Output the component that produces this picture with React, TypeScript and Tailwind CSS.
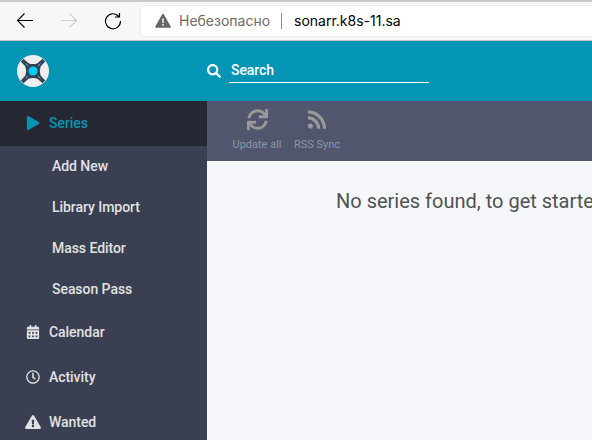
import type { ReactNode } from "react";
import {
  FaCalendarAlt,
  FaExclamationTriangle,
  FaPlay,
  FaRegClock,
  FaRss,
  FaSearch,
  FaSync,
} from "react-icons/fa";

function BrowserBar() {
  return (
    <div className="flex h-[41px] shrink-0 items-center border-t-2 border-b border-t-[#cacaca] border-b-[#c6c6c6] bg-[#f7f7f7] text-black">
      <svg className="ml-[16px] h-[18px] w-[18px] shrink-0" viewBox="0 0 18 18" fill="none" stroke="currentColor" strokeWidth="1.1">
        <path d="M17 8.5H1.5M8.5 1.5L1.5 8.5L8.5 15.5" />
      </svg>
      <svg className="ml-[26px] h-[18px] w-[18px] shrink-0 text-[#cdcdcd]" viewBox="0 0 18 18" fill="none" stroke="currentColor" strokeWidth="1.1">
        <path d="M1 8.5H16.5M9.5 1.5L16.5 8.5L9.5 15.5" />
      </svg>
      <svg className="ml-[26px] h-[18px] w-[18px] shrink-0" viewBox="0 0 18 18" fill="none" stroke="currentColor" strokeWidth="1.2">
        <path d="M14.8 4.5A7.5 7.5 0 1 0 16.5 9M15.5 1V5H11" />
      </svg>
      <div className="ml-[19px] flex h-[30px] grow items-center rounded-l-[4px] bg-white font-['Inter',sans-serif] text-[14px] leading-[20px] shadow-[0_0_3px_rgba(0,0,0,0.1)]">
        <svg className="ml-[14px] h-[16px] w-[16px] shrink-0" viewBox="0 0 16 16">
          <path d="M8 1.5L15 14H1Z" fill="#666" stroke="#666" strokeWidth="1.6" strokeLinejoin="round" />
          <path d="M8 5.5V10M8 11V12.7" stroke="#e8e8e8" strokeWidth="1.6" />
        </svg>
        <span className="ml-[8px] w-[90px] whitespace-nowrap text-[#6b6b6b]">Небезопасно</span>
        <span className="ml-[12px] h-[16px] w-px bg-[#8f8f8f]" />
        <span className="ml-[12px] whitespace-nowrap">sonarr.k8s-11.sa</span>
      </div>
    </div>
  );
}

function Logo() {
  return (
    <svg className="h-8 w-8 shrink-0" viewBox="0 0 32 32">
      <circle cx="16" cy="16" r="16" fill="#eee" />
      <path
        d="M6.5 3.8L11.5 8.2Q16 10 20.5 8.2L25.5 3.8L28.2 6.5L23.6 11.5Q22 16 23.6 20.5L28.2 25.5L25.5 28.2L20.5 23.8Q16 22 11.5 23.8L6.5 28.2L3.8 25.5L8.4 20.5Q10 16 8.4 11.5L3.8 6.5Z"
        fill="#3a3f51"
      />
      <path d="M8.5 8.5L11 11M23.5 8.5L21 11M8.5 23.5L11 21M23.5 23.5L21 21" stroke="#0cf" strokeWidth="1" />
      <circle cx="16" cy="16" r="4.6" fill="#0cf" />
    </svg>
  );
}

function NavItem({ icon, label, active = false }: { icon: ReactNode; label: string; active?: boolean }) {
  return (
    <div className={`flex h-[45px] shrink-0 items-center pb-px pl-[24px] ${active ? "bg-[#252833] text-[#0595b4]" : ""}`}>
      <span className="mr-[7px] flex w-[18px] justify-center">{icon}</span>
      {label}
    </div>
  );
}

function ToolbarButton({ icon, label }: { icon: ReactNode; label: string }) {
  return (
    <div className="flex w-[60px] flex-col items-center pt-[8px]">
      <span className="text-[#999]">{icon}</span>
      <span className="mt-[6px] whitespace-nowrap text-[11px] leading-[17px] text-[#8895aa]">{label}</span>
    </div>
  );
}

const seriesLinks = ["Add New", "Library Import", "Mass Editor", "Season Pass"];

export default function App() {
  return (
    <div className="flex h-[440px] w-[592px] flex-col overflow-hidden bg-[#f5f7fa] font-['Roboto',sans-serif] text-[14px] leading-[20px]">
      <BrowserBar />
      <header className="flex h-[60px] shrink-0 items-center bg-[#0595b4] pl-[17px] text-white">
        <Logo />
        <FaSearch size={14} className="ml-[158px]" />
        <div className="ml-[8px] flex h-[24px] w-[200px] items-center border-b border-white pb-[2px] pl-[2px] font-medium tracking-[-0.1px]">Search</div>
      </header>
      <div className="flex min-h-0 grow">
        <nav className="flex w-[207px] shrink-0 flex-col overflow-hidden bg-[#3a3f51] font-medium tracking-[-0.05px] text-[#e1e2e3]">
          <NavItem active icon={<FaPlay size={14} />} label="Series" />
          {seriesLinks.map((label) => (
            <div key={label} className="flex h-[41px] shrink-0 items-center pb-[2px] pl-[52px]">{label}</div>
          ))}
          <NavItem icon={<FaCalendarAlt size={14} />} label="Calendar" />
          <NavItem icon={<FaRegClock size={14} />} label="Activity" />
          <NavItem icon={<FaExclamationTriangle className="h-[14px] w-[16px]" />} label="Wanted" />
        </nav>
        <main className="flex min-w-0 grow flex-col overflow-hidden">
          <div className="flex h-[60px] shrink-0 bg-[#51566e] pl-[20px]">
            <ToolbarButton icon={<FaSync size={21} />} label="Update all" />
            <ToolbarButton icon={<FaRss className="h-[21px] w-[20px]" />} label="RSS Sync" />
          </div>
          <p className="mt-[26px] ml-[129px] whitespace-nowrap text-[20px] leading-[28px] text-[#515253]">No series found, to get started</p>
        </main>
      </div>
    </div>
  );
}
